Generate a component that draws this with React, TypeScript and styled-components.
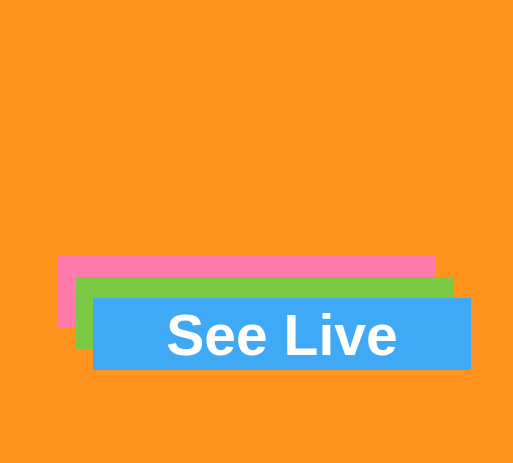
import React, { ReactElement } from "react"
import styled, { createGlobalStyle } from "styled-components"

const GlobalStyle = createGlobalStyle`
	html, body {
		margin: 0;
		padding: 0;
		background: #ff931e;
	}
`

const Page = styled.div`
	width: 513px;
	height: 463px;
	box-sizing: border-box;
	padding: 298px 0 0 93px;
	background: #ff931e;
	overflow: hidden;
`

const StackedButton = styled.a`
	display: block;
	box-sizing: border-box;
	width: 378px;
	height: 72px;
	padding-top: 2px;
	background: #3fa9f5;
	box-shadow:
		-17px -21px 0 #7ac943,
		-36px -43px 0 #ff7bac;
	color: #ffffff;
	font-family: "Liberation Sans", Arial, sans-serif;
	font-weight: bold;
	font-size: 57px;
	line-height: 71px;
	text-align: center;
	text-decoration: none;
	cursor: pointer;
`

const buttonText = "See Live"

const App = (): ReactElement => (
	<>
		<GlobalStyle />
		<Page>
			<StackedButton>{buttonText}</StackedButton>
		</Page>
	</>
)

export default App
